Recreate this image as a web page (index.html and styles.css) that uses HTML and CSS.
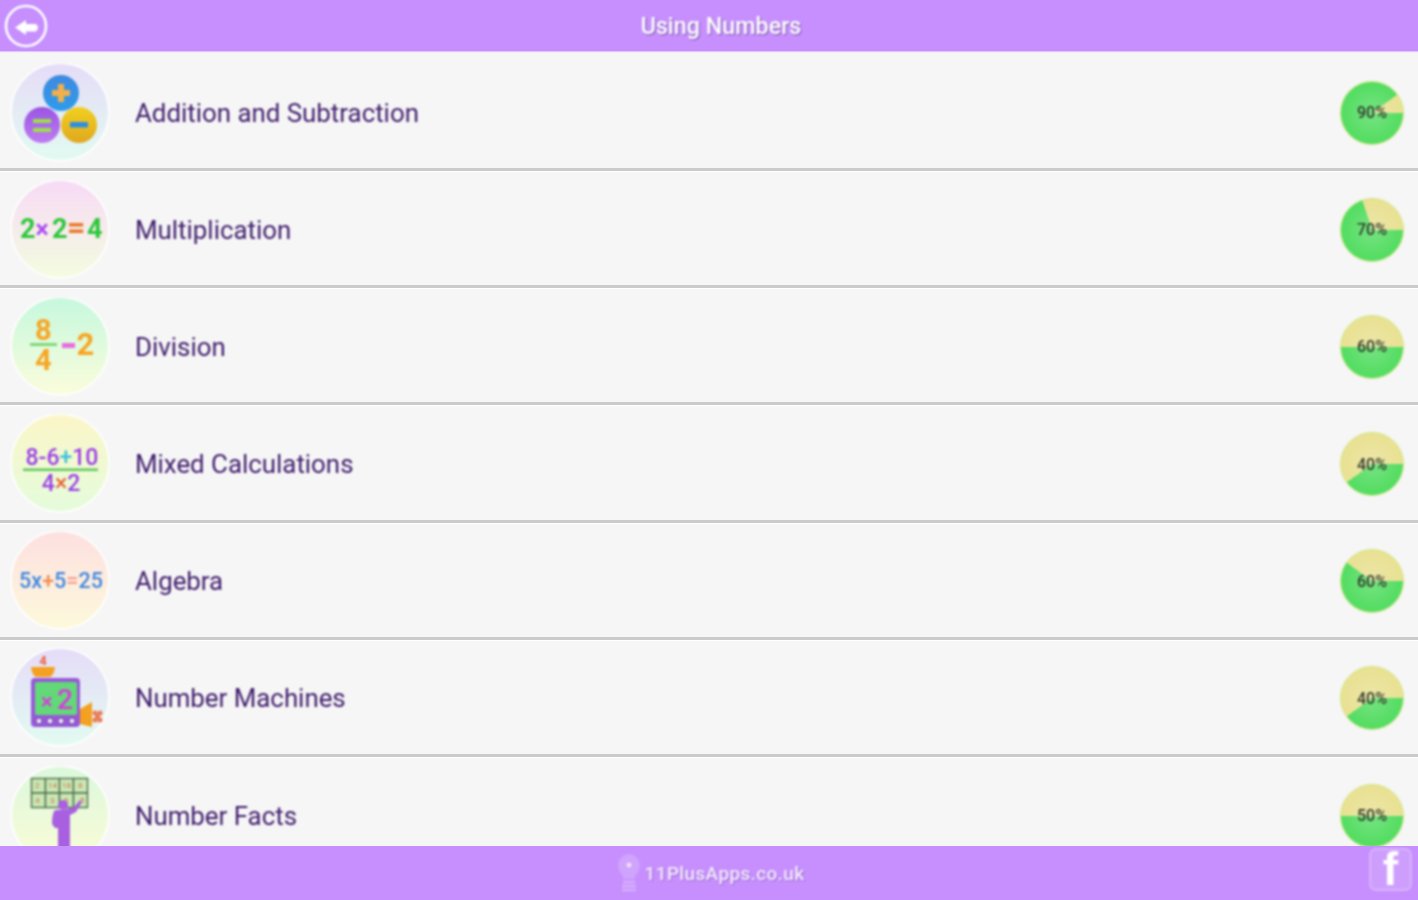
FILE: index.html
```html
<!DOCTYPE html>
<html lang="en">
<head>
<meta charset="utf-8">
<title>Using Numbers</title>
<link rel="stylesheet" href="styles.css">
</head>
<body>
<div class="app">
  <header class="topbar">
    <svg class="back" viewBox="0 0 44 44" aria-hidden="true">
      <circle cx="22" cy="22" r="20" fill="none" stroke="#fff" stroke-width="2.6"/>
      <path d="M11 23.500 L22 16 V20 H32 Q36 23.500 32 27.500 H22 V31 Z" fill="#fff"/>
    </svg>
    <h1 class="title">Using Numbers</h1>
  </header>

  <main class="list">
    <div class="row">
      <svg class="icon" viewBox="0 0 100 100" aria-hidden="true">
        <defs>
          <linearGradient id="g1" x1="0" y1="0" x2="0" y2="1"><stop offset="0" stop-color="#e6dcf8"/><stop offset="1" stop-color="#e2fbf1"/></linearGradient>
          <linearGradient id="bBlue" x1="0" y1="0" x2="0" y2="1"><stop offset="0" stop-color="#3f8ae0"/><stop offset="1" stop-color="#2f9bec"/></linearGradient>
          <linearGradient id="bPurple" x1="0" y1="0" x2="0" y2="1"><stop offset="0" stop-color="#9a55e4"/><stop offset="1" stop-color="#c07cf2"/></linearGradient>
          <linearGradient id="bYellow" x1="0" y1="0" x2="0" y2="1"><stop offset="0" stop-color="#f2d020"/><stop offset="1" stop-color="#e0a820"/></linearGradient>
        </defs>
        <circle class="disc" cx="50" cy="49" r="49" fill="url(#g1)"/>
        <circle cx="51" cy="30" r="18" fill="url(#bBlue)"/>
        <path d="M48 21h6v6h6v6h-6v6h-6v-6h-6v-6h6z" fill="#f2b04a"/>
        <circle cx="32" cy="62" r="18" fill="url(#bPurple)"/>
        <path d="M23 56h18v4h-18zM23 65h18v4h-18z" fill="#9be04a"/>
        <circle cx="69" cy="62" r="18" fill="url(#bYellow)"/>
        <rect x="60" y="59" width="18" height="5.500" rx="1" fill="#2b8fe0"/>
      </svg>
      <span class="name">Addition and Subtraction</span>
      <div class="pie" style="--p:90"><span class="pct">90%</span></div>
    </div>

    <div class="row">
      <svg class="icon" viewBox="0 0 100 100" aria-hidden="true">
        <defs><linearGradient id="g2" x1="0" y1="0" x2="0" y2="1"><stop offset="0" stop-color="#f8daf6"/><stop offset="1" stop-color="#f3fde0"/></linearGradient></defs>
        <circle class="disc" cx="50" cy="49" r="49" fill="url(#g2)"/>
        <text class="math" x="10" y="58" font-size="27" fill="#2ec63c">2</text>
        <text class="math" x="25.500" y="58" font-size="25" fill="#a94cf0">×</text>
        <text class="math" x="42" y="58" font-size="27" fill="#2ec63c">2</text>
        <text class="math" x="57" y="58" font-size="32" fill="#e8782a">=</text>
        <text class="math" x="77" y="58" font-size="27" fill="#2ec63c">4</text>
      </svg>
      <span class="name">Multiplication</span>
      <div class="pie" style="--p:70"><span class="pct">70%</span></div>
    </div>

    <div class="row">
      <svg class="icon" viewBox="0 0 100 100" aria-hidden="true">
        <defs><linearGradient id="g3" x1="0" y1="0" x2="0" y2="1"><stop offset="0" stop-color="#c6f8de"/><stop offset="1" stop-color="#fbfddc"/></linearGradient></defs>
        <circle class="disc" cx="50" cy="49" r="49" fill="url(#g3)"/>
        <text class="math" x="25" y="43" font-size="29" fill="#f6a623">8</text>
        <rect x="20" y="46" width="27" height="3" fill="#7ed87a"/>
        <text class="math" x="25" y="73" font-size="29" fill="#f6a623">4</text>
        <rect x="52" y="46" width="13" height="5" fill="#e86de0"/>
        <text class="math" x="66.500" y="58" font-size="31" fill="#f6a623">2</text>
      </svg>
      <span class="name">Division</span>
      <div class="pie" style="--p:50"><span class="pct">60%</span></div>
    </div>

    <div class="row">
      <svg class="icon" viewBox="0 0 100 100" aria-hidden="true">
        <defs><linearGradient id="g4" x1="0" y1="0" x2="0" y2="1"><stop offset="0" stop-color="#fcf6c8"/><stop offset="1" stop-color="#e4fcdc"/></linearGradient></defs>
        <circle class="disc" cx="50" cy="49" r="49" fill="url(#g4)"/>
        <text class="math-m mid" x="52" y="51" font-size="23" fill="#9b3fe8">8-6<tspan fill="#3fc0d8">+</tspan>10</text>
        <rect x="13" y="54.500" width="75" height="2.500" fill="#62c860"/>
        <text class="math-m mid" x="51" y="77" font-size="23" fill="#9b3fe8">4<tspan fill="#e8663a">×</tspan>2</text>
      </svg>
      <span class="name">Mixed Calculations</span>
      <div class="pie" style="--p:40"><span class="pct">40%</span></div>
    </div>

    <div class="row">
      <svg class="icon" viewBox="0 0 100 100" aria-hidden="true">
        <defs><linearGradient id="g5" x1="0" y1="0" x2="0" y2="1"><stop offset="0" stop-color="#fde0e0"/><stop offset="1" stop-color="#fdf9dc"/></linearGradient></defs>
        <circle class="disc" cx="50" cy="49" r="49" fill="url(#g5)"/>
        <text class="math-m mid" x="51" y="57" font-size="21.500" fill="#3f86e0">5x<tspan fill="#f08a50">+</tspan>5<tspan fill="#f4a090">=</tspan>25</text>
      </svg>
      <span class="name">Algebra</span>
      <div class="pie" style="--p:60"><span class="pct">60%</span></div>
    </div>

    <div class="row">
      <svg class="icon" viewBox="0 0 100 100" aria-hidden="true">
        <defs><linearGradient id="g6" x1="0" y1="0" x2="0" y2="1"><stop offset="0" stop-color="#e6dcf8"/><stop offset="1" stop-color="#e2fbf1"/></linearGradient></defs>
        <circle class="disc" cx="50" cy="49" r="49" fill="url(#g6)"/>
        <text class="math mid" x="33" y="17" font-size="13" fill="#e8603a">4</text>
        <path d="M21 19 H45 Q44 27 40 29 H26 Q22 27 21 19 Z" fill="#f4a020"/>
        <rect x="21" y="30" width="49" height="49" rx="4" fill="#9858d8"/>
        <rect x="25" y="34" width="42" height="33" rx="2" fill="#62d878"/>
        <text class="math-m" x="31" y="61" font-size="22" fill="#d83ae0">×</text>
        <text class="math-m" x="47" y="61" font-size="28" fill="#d83ae0">2</text>
        <g fill="#e8e0f4" stroke="#6a4aa0" stroke-width="1">
          <circle cx="29" cy="73" r="3"/><circle cx="40" cy="73" r="3"/><circle cx="51" cy="73" r="3"/><circle cx="62" cy="73" r="3"/>
        </g>
        <path d="M70 61 L82 54 V79 L70 76 Z" fill="#f4a020"/>
        <g fill="#ea7a55"><circle cx="85" cy="65" r="2.500"/><circle cx="90" cy="65" r="2.500"/><circle cx="87.500" cy="68.500" r="2.500"/><circle cx="85" cy="72" r="2.500"/><circle cx="90" cy="72" r="2.500"/></g>
      </svg>
      <span class="name">Number Machines</span>
      <div class="pie" style="--p:40"><span class="pct">40%</span></div>
    </div>

    <div class="row">
      <svg class="icon" viewBox="0 0 100 100" aria-hidden="true">
        <defs><linearGradient id="g7" x1="0" y1="0" x2="0" y2="1"><stop offset="0" stop-color="#dcf8dc"/><stop offset="1" stop-color="#fbfcd8"/></linearGradient></defs>
        <circle class="disc" cx="50" cy="49" r="49" fill="url(#g7)"/>
        <g fill="#c8e8b4" stroke="#4f6f4f" stroke-width="1.400">
          <rect x="21.500" y="12.500" width="14" height="14.500"/><rect x="35.500" y="12.500" width="14" height="14.500"/><rect x="49.500" y="12.500" width="14" height="14.500"/><rect x="63.500" y="12.500" width="14" height="14.500"/>
          <rect x="21.500" y="27" width="14" height="14.500"/><rect x="35.500" y="27" width="14" height="14.500"/><rect x="49.500" y="27" width="14" height="14.500"/><rect x="63.500" y="27" width="14" height="14.500"/>
        </g>
        <g class="grid-digits" fill="#d8704f" font-size="8">
          <text x="25" y="22">2</text><text x="38" y="22">14</text><text x="52" y="22">18</text><text x="68" y="22">8</text>
          <text x="25" y="37">4</text><text x="40" y="37">3</text><text x="54" y="37">6</text><text x="70" y="37">5</text>
        </g>
        <circle cx="53" cy="39" r="5" fill="#a860e0"/>
        <path d="M44 45 Q46 43 53 44 L64 41 L70 34 L72 36 L66 46 L60 49 V90 H48 V62 H45 L42 58 Q42 50 44 45 Z" fill="#a860e0"/>
      </svg>
      <span class="name">Number Facts</span>
      <div class="pie" style="--p:50"><span class="pct">50%</span></div>
    </div>
  </main>

  <footer class="bottombar">
    <div class="brand">
      <svg class="brand-logo" viewBox="0 0 24 40" aria-hidden="true">
        <path d="M12 1 C18 1 23 6 23 12 C23 18 20 21 18 23 V26 H6 V23 C4 21 1 18 1 12 C1 6 6 1 12 1 Z" fill="#fff" fill-opacity=".18"/>
        <path d="M12 9 L15 12 L12 15 L9 12 Z" fill="#fff" fill-opacity=".7"/>
        <path d="M6 29 H18 M5 33 H19 M5 37 H19" stroke="#fff" stroke-opacity=".3" stroke-width="2.500"/>
      </svg>
      <span class="brand-name">11PlusApps.co.uk</span>
    </div>
    <div class="fb"><span class="fb-f">f</span></div>
  </footer>
</div>
</body>
</html>
```
FILE: styles.css
```css
* { box-sizing: border-box; }
html, body { margin: 0; height: 100%; }
body { background: #f6f6f6; overflow: hidden; }

.app {
  width: 1418px;
  height: 900px;
  display: flex;
  flex-direction: column;
  font-family: Roboto, "Liberation Sans", sans-serif;
  background: #f6f6f6;
}

/* The reference is an upscaled capture: its content is uniformly soft. */
.back, .title, .icon, .name, .pie, .brand, .fb {
  filter: blur(0.8px);
}

.topbar {
  flex: 0 0 51px;
  display: flex;
  align-items: center;
  padding: 0 24px 0 4px;
  background: #c68ffd;
  box-shadow: 0 1px 1px rgba(198, 143, 253, .45);
  position: relative;
  z-index: 1;
}
.back {
  flex: 0 0 44px;
  width: 44px;
  height: 44px;
}
.title {
  flex: 1;
  margin: 0;
  color: #fff;
  font-size: 23.300px;
  font-weight: 500;
  text-align: center;
  text-shadow: 1px 1px 1px rgba(70, 40, 110, .6);
}

.list {
  flex: 1 1 0;
  min-height: 0;
  overflow: hidden;
  padding-top: 3px;
}
.row {
  height: 117.17px;
  display: flex;
  align-items: center;
  padding: 3px 14px 0 10px;
  border-bottom: 3px solid #cbcbcb;
  box-shadow: 0 1px 1px #fff;
}
.icon {
  flex: 0 0 100px;
  width: 100px;
  height: 100px;
}
.disc {
  stroke: #fdfdfd;
  stroke-width: 2;
}
.math {
  font-family: Roboto, "Liberation Sans", sans-serif;
  font-weight: 700;
}
.math-m {
  font-family: Roboto, "Liberation Sans", sans-serif;
  font-weight: 500;
}
.mid { text-anchor: middle; }
.grid-digits {
  font-family: Roboto, "Liberation Sans", sans-serif;
}
.name {
  flex: 1;
  margin-left: 25px;
  color: #3f1c6c;
  font-size: 25.850px;
}
.pie {
  width: 64px;
  height: 64px;
  border-radius: 50%;
  display: flex;
  align-items: center;
  justify-content: center;
  border: 1px solid #cfe67c;
  background:
    radial-gradient(circle, rgba(255, 255, 255, .2), rgba(255, 255, 255, 0) 62%),
    conic-gradient(from 90deg, #56dd64 0 calc(var(--p) * 1%), #e9e194 0 100%);
}
.pct {
  color: #2f3a2c;
  font-size: 16px;
  font-weight: 500;
}

.bottombar {
  flex: 0 0 54px;
  display: flex;
  align-items: center;
  padding: 0 6px 0 52px;
  background: #c68ffd;
  position: relative;
  z-index: 1;
}
.brand {
  flex: 1;
  display: flex;
  align-items: center;
  justify-content: center;
  gap: 4px;
}
.brand-logo {
  width: 24px;
  height: 40px;
}
.brand-name {
  color: #f6ecff;
  font-size: 19px;
  font-weight: 500;
  letter-spacing: .35px;
  text-shadow: 1px 1px 1px rgba(70, 40, 110, .35);
}
.fb {
  flex: 0 0 43px;
  height: 43px;
  margin-bottom: 7px;
  border-radius: 7px;
  background: rgba(255, 255, 255, .14);
  border: 2px solid rgba(255, 255, 255, .2);
  display: flex;
  align-items: center;
  justify-content: center;
}
.fb-f {
  color: #fff;
  font-family: "Liberation Sans", sans-serif;
  font-size: 46px;
  line-height: 39px;
  font-weight: 700;
}
```
